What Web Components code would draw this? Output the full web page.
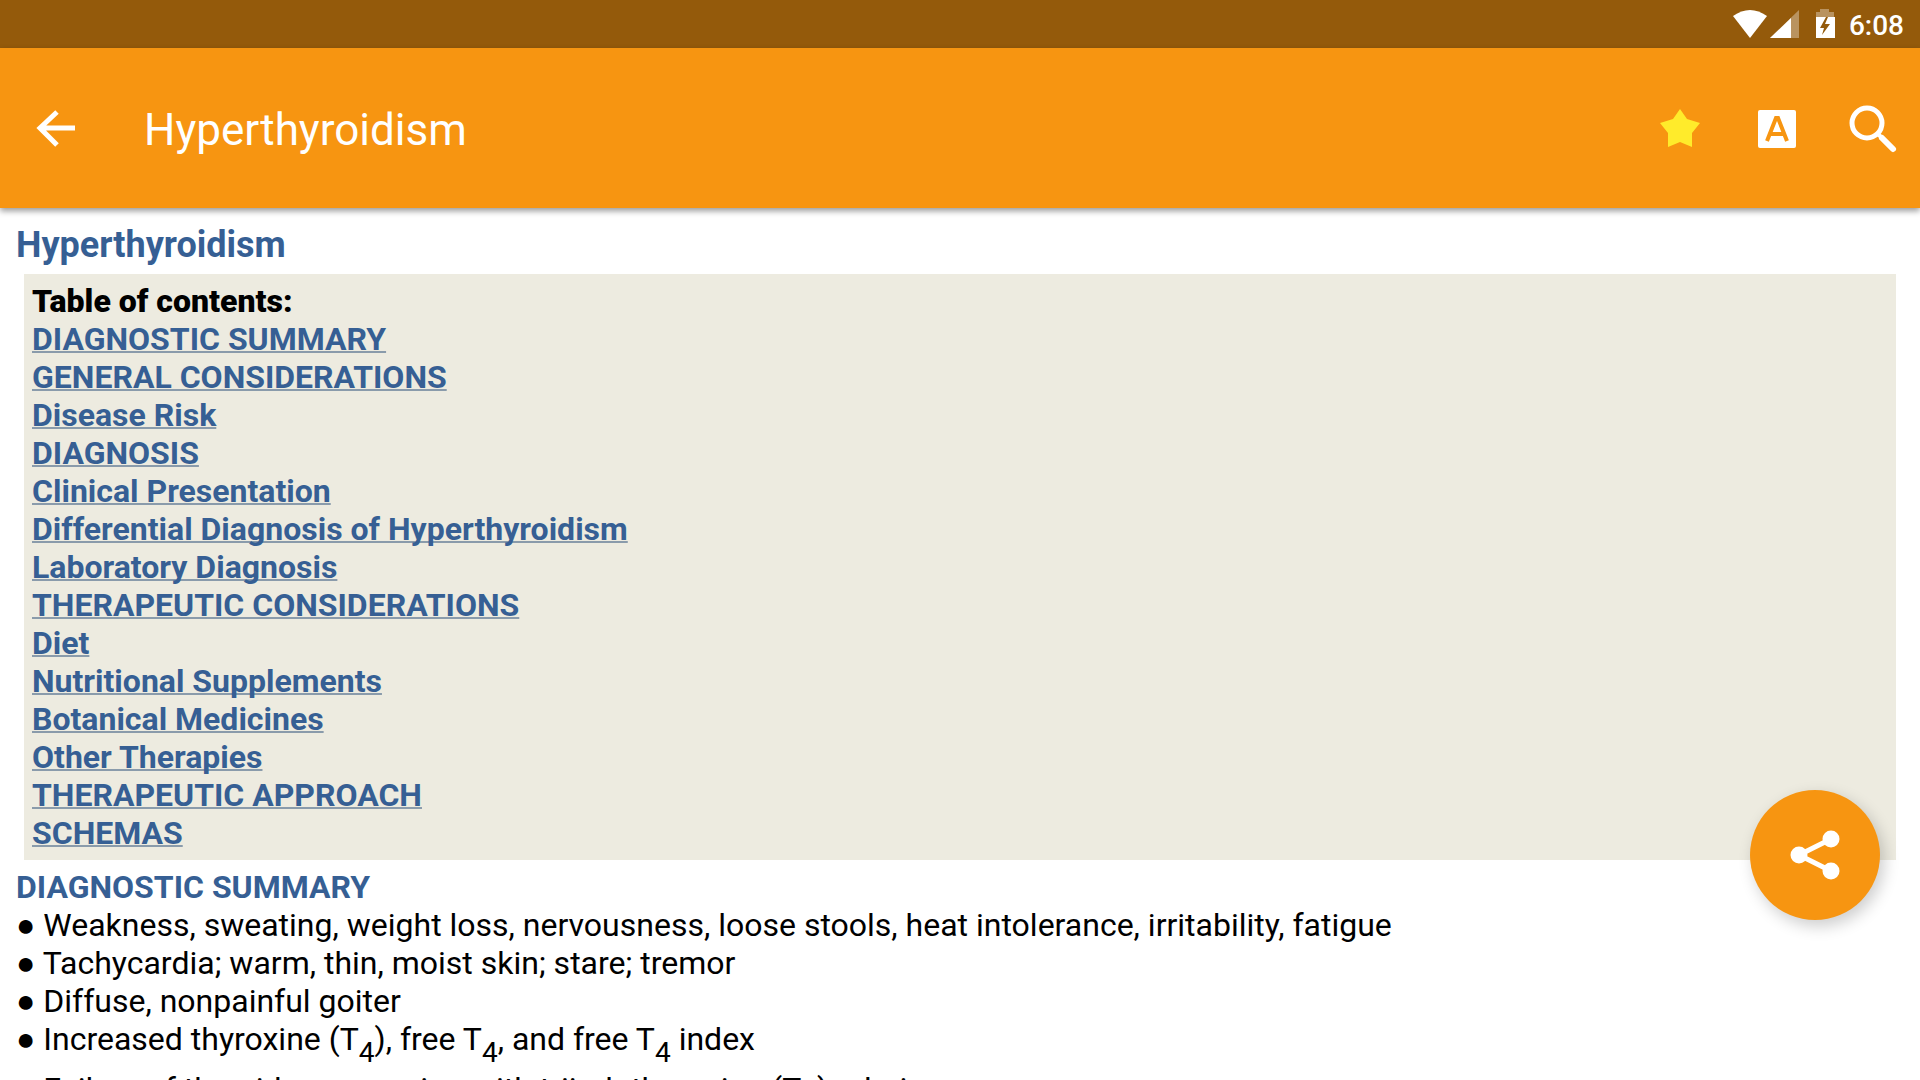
<!DOCTYPE html>
<html lang="en">
<head>
<meta charset="utf-8">
<title>Hyperthyroidism</title>
<style>
    html, body {height: 100%;}
    body {margin: 0; background: #fff; color: #000; font-family: Roboto, sans-serif; overflow: hidden;}
    sub {font-size: 28px; line-height: 34px; vertical-align: -12px;}
</style>
</head>
<body>
<reader-app>
    <status-bar slot="top" time="6:08"></status-bar>
    <app-toolbar slot="top" label="Hyperthyroidism"></app-toolbar>
    <article-title>Hyperthyroidism</article-title>
    <contents-box label="Table of contents:">
        <a href="#summary">DIAGNOSTIC SUMMARY</a>
        <a href="#general">GENERAL CONSIDERATIONS</a>
        <a href="#risk">Disease Risk</a>
        <a href="#diagnosis">DIAGNOSIS</a>
        <a href="#clinical">Clinical Presentation</a>
        <a href="#differential">Differential Diagnosis of Hyperthyroidism</a>
        <a href="#laboratory">Laboratory Diagnosis</a>
        <a href="#therapeutic">THERAPEUTIC CONSIDERATIONS</a>
        <a href="#diet">Diet</a>
        <a href="#supplements">Nutritional Supplements</a>
        <a href="#botanical">Botanical Medicines</a>
        <a href="#other">Other Therapies</a>
        <a href="#approach">THERAPEUTIC APPROACH</a>
        <a href="#schemas">SCHEMAS</a>
    </contents-box>
    <article-section id="summary" label="DIAGNOSTIC SUMMARY">
        <bullet-line>Weakness, sweating, weight loss, nervousness, loose stools, heat intolerance, irritability, fatigue</bullet-line>
        <bullet-line>Tachycardia; warm, thin, moist skin; stare; tremor</bullet-line>
        <bullet-line>Diffuse, nonpainful goiter</bullet-line>
        <bullet-line>Increased thyroxine (T<sub>4</sub>), free T<sub>4</sub>, and free T<sub>4</sub> index</bullet-line>
        <bullet-line>Failure of thyroid suppression with triiodothyronine (T<sub>3</sub>) admin</bullet-line>
    </article-section>
    <share-button slot="fab"></share-button>
</reader-app>

<script>
class ReaderApp extends HTMLElement {
    constructor() {
        super();
        this.attachShadow({ mode: 'open' });
        this.shadowRoot.innerHTML = `
<style>
    :host {display: flex; flex-direction: column; height: 100vh;}
    header {flex: none; z-index: 1;}
    main {flex: 1; min-height: 0; overflow: hidden; padding: 16px 16px 0;}
    .fab {position: fixed; right: 40px; bottom: 160px; z-index: 2;}
</style>
<header><slot name="top"></slot></header>
<main><slot></slot></main>
<div class="fab"><slot name="fab"></slot></div>`
    }
}
window.customElements.define('reader-app', ReaderApp);

class StatusBar extends HTMLElement {
    constructor() {
        super();
        this.attachShadow({ mode: 'open' });
    }

    connectedCallback() {
        this.render();
        this.shadowRoot.querySelector('time').innerText = this.getAttribute('time');
    }

    render() {
        this.shadowRoot.innerHTML = `
<style>
    :host {display: flex; align-items: center; justify-content: flex-end; height: 48px;
        padding-right: 16px; background: #945a0b; color: #fff;}
    svg {display: block;}
    time {padding: 4px 0 0 14px; font-size: 28px; line-height: 32px; font-weight: 500;}
</style>
<svg width="84" height="48" viewBox="0 0 84 48" fill="#fff">
    <path d="M2 16Q19 4 36 16L19 38Z"/>
    <path opacity=".35" d="M68 10V38H39Z"/>
    <path d="M60 18V38H39Z"/>
</svg>
<svg width="20" height="48" viewBox="0 0 20 48">
    <path fill="#fff" opacity=".35" d="M1 17V12H5V9H14V12H19V17Z"/>
    <path fill="#fff" d="M1 17H20V38H1Z"/>
    <path fill="#945a0b" d="M11 17L5 28H9L7 35L15 24H10L13 17Z"/>
</svg>
<time></time>`
    }
}
window.customElements.define('status-bar', StatusBar);

class AppToolbar extends HTMLElement {
    constructor() {
        super();
        this.attachShadow({ mode: 'open' });
    }

    connectedCallback() {
        this.render();
        this.shadowRoot.querySelector('h1').innerText = this.getAttribute('label');
    }

    render() {
        this.shadowRoot.innerHTML = `
<style>
    :host {display: flex; align-items: center; height: 160px; box-sizing: border-box;
        padding: 0 0 0 8px; background: #f79511; color: #fff; box-shadow: 0 3px 6px rgba(0,0,0,.4);}
    button {width: 96px; height: 96px; padding: 0; border: 0; background: none;}
    svg {display: block;}
    h1 {flex: 1; margin: 0 0 0 40px; padding-top: 4px; font-size: 44px; line-height: 56px; font-weight: 400;}
</style>
<button aria-label="Back">
    <svg width="96" height="96" viewBox="0 0 96 96" fill="none" stroke="#fff" stroke-width="5">
        <path d="M67 48H32M49 32L32 48L49 65"/>
    </svg>
</button>
<h1></h1>
<button aria-label="Favourite">
    <svg width="96" height="96" viewBox="0 0 96 96">
        <path fill="#ffeb2b" d="M48 29L55 39L68 43L60 53L60 67L48 62L36 67L36 53L28 43L41 39Z"/>
    </svg>
</button>
<button aria-label="Text size">
    <svg width="96" height="96" viewBox="0 0 96 96">
        <rect x="30" y="30" width="38" height="38" rx="2" fill="#fff"/>
        <path fill="none" stroke="#f79511" stroke-width="4" d="M39 61L48 38H50L59 61M42 54H56"/>
    </svg>
</button>
<button aria-label="Search">
    <svg width="96" height="96" viewBox="0 0 96 96" fill="none" stroke="#fff">
        <circle cx="43" cy="43" r="15" stroke-width="5"/>
        <path stroke-width="4" d="M53 53L58 58"/>
        <path stroke-width="6" stroke-linecap="round" d="M58 58L69 69"/>
    </svg>
</button>`
    }
}
window.customElements.define('app-toolbar', AppToolbar);

class ArticleTitle extends HTMLElement {
    constructor() {
        super();
        this.attachShadow({ mode: 'open' });
        this.shadowRoot.innerHTML = `
<style>
    :host {display: block;}
    h2 {margin: 0 0 8px; color: #365f94; font-size: 36px; line-height: 42px; font-weight: 700;}
</style>
<h2><slot></slot></h2>`
    }
}
window.customElements.define('article-title', ArticleTitle);

class ContentsBox extends HTMLElement {
    constructor() {
        super();
        this.attachShadow({ mode: 'open' });
    }

    connectedCallback() {
        this.render();
        this.shadowRoot.querySelector('strong').innerText = this.getAttribute('label');
    }

    render() {
        this.shadowRoot.innerHTML = `
<style>
    :host {display: block; margin: 0 8px 8px; padding: 8px; background: #edebe0;
        font-size: 32px; line-height: 38px; font-weight: 700;}
    nav {display: flex; flex-direction: column; align-items: flex-start;}
    ::slotted(a) {color: #365f94; text-decoration: underline 2px #8a9bab; text-decoration-skip-ink: none;}
</style>
<nav>
    <strong></strong>
    <slot></slot>
</nav>`
    }
}
window.customElements.define('contents-box', ContentsBox);

class ArticleSection extends HTMLElement {
    constructor() {
        super();
        this.attachShadow({ mode: 'open' });
    }

    connectedCallback() {
        this.render();
        this.shadowRoot.querySelector('h3').innerText = this.getAttribute('label');
    }

    render() {
        this.shadowRoot.innerHTML = `
<style>
    :host {display: block; font-size: 32px; line-height: 38px;}
    h3 {margin: 0; color: #365f94; font-size: 32px; font-weight: 700;}
</style>
<h3></h3>
<div role="list"><slot></slot></div>`
    }
}
window.customElements.define('article-section', ArticleSection);

class BulletLine extends HTMLElement {
    constructor() {
        super();
        this.attachShadow({ mode: 'open' });
        this.setAttribute('role', 'listitem');
        this.shadowRoot.innerHTML = `
<style>
    :host {display: block;}
</style>
● <slot></slot>`
    }
}
window.customElements.define('bullet-line', BulletLine);

class ShareButton extends HTMLElement {
    constructor() {
        super();
        this.attachShadow({ mode: 'open' });
        this.shadowRoot.innerHTML = `
<style>
    :host {display: block;}
    button {display: block; width: 130px; height: 130px; padding: 0; border: 0; border-radius: 50%;
        background: #f79511; box-shadow: 4px 6px 16px rgba(0,0,0,.2);}
    svg {display: block;}
</style>
<button aria-label="Share">
    <svg width="130" height="130" viewBox="0 0 130 130" fill="#fff">
        <path fill="none" stroke="#fff" stroke-width="5" d="M81 49L49 65L81 81"/>
        <circle cx="49" cy="65" r="8.5"/>
        <circle cx="81" cy="49" r="8.5"/>
        <circle cx="81" cy="81" r="8.5"/>
    </svg>
</button>`
    }
}
window.customElements.define('share-button', ShareButton);
</script>
</body>
</html>
